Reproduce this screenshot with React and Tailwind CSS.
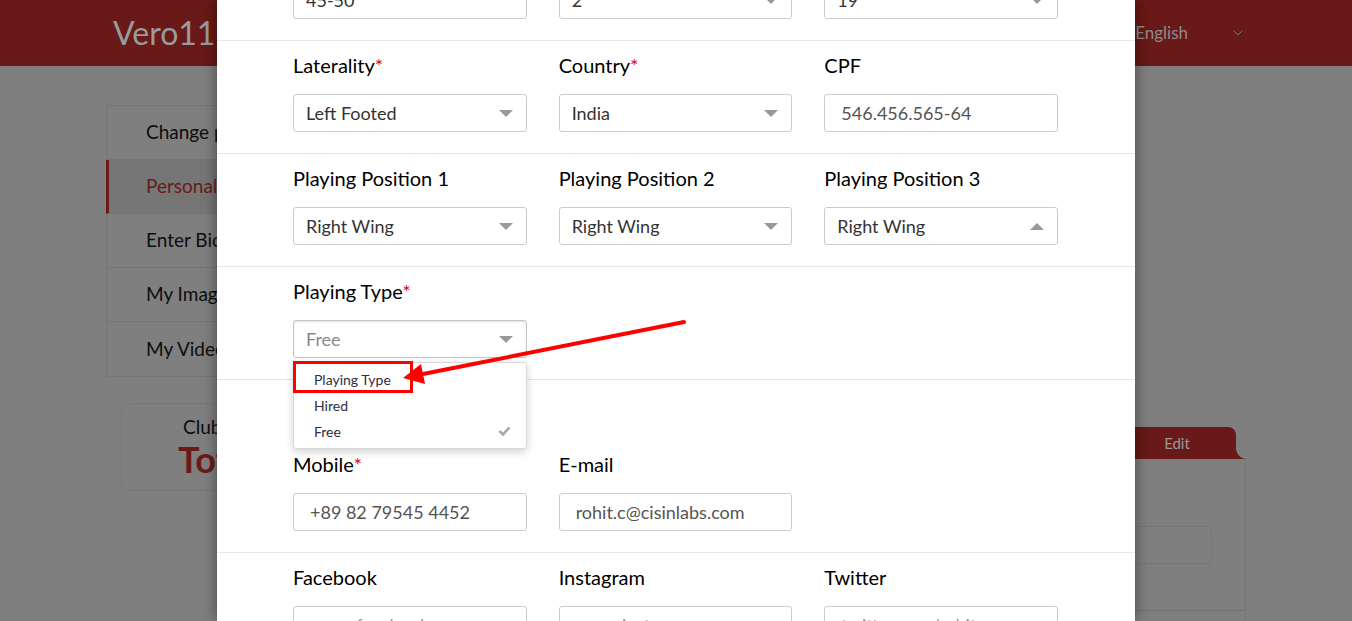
import { ChevronDown } from "lucide-react";

const Arrow = ({ up }) => (
  <svg width="14" height="7" viewBox="0 0 14 7" className="shrink-0">
    {up ? <polygon points="0,7 14,7 7,0" fill="#999" /> : <polygon points="0,0 14,0 7,7" fill="#999" />}
  </svg>
);

function Label({ text, required }) {
  return (
    <div className="mb-[16px] text-[20px] leading-[25px] text-black">
      {text}
      {required && <span className="text-[#e4001b]">*</span>}
    </div>
  );
}

function Select({ value, up, muted, focused, noArrow }) {
  return (
    <div
      className={`flex h-[38px] items-center justify-between rounded-[3px] border bg-white pl-3 pr-[13px] text-[18px] ${
        focused ? "border-[#c4c4c4] shadow-[inset_0_1px_2px_rgba(0,0,0,0.12)]" : "border-[#ccc]"
      } ${muted ? "text-[#888]" : "text-[#333]"}`}
    >
      <span>{value}</span>
      {!noArrow && <Arrow up={up} />}
    </div>
  );
}

function Input({ value, placeholder }) {
  return (
    <div className="flex h-[38px] items-center rounded-[3px] border border-[#ccc] bg-white px-4 text-[18px] text-[#555]">
      {value ? <span>{value}</span> : <span className="text-[#999]">{placeholder}</span>}
    </div>
  );
}

function Section({ children, className = "" }) {
  return (
    <div className={`border-b border-[#e6e6e6] pb-[21px] pl-[76px] pr-[77px] ${className}`}>
      <div className="grid grid-cols-3 gap-x-[32px]">{children}</div>
    </div>
  );
}

const sideItems = ["Change password", "Personal Details", "Enter Bio", "My Images", "My Videos"];

export default function App() {
  return (
    <div className="relative h-[621px] w-full overflow-hidden bg-[#7f7f7f] font-['Lato',sans-serif]">
      {/* page behind the modal (dimmed) */}
      <header className="flex h-[66px] items-center justify-between bg-[#691917] pl-[113px] pr-[106px]">
        <span className="text-[32px] text-[#9b9b9b]">Vero11</span>
        <div className="flex items-center gap-[42px]">
          <span className="text-[17px] text-[#8c8c8c]">English</span>
          <ChevronDown size={16} strokeWidth={1.5} color="#7a7a7a" />
        </div>
      </header>

      <div className="flex px-[106px]">
        <div className="w-[330px] pt-[39px]">
          <div className="border border-r-0 border-[#767676]">
            {sideItems.map((item, i) =>
              i === 1 ? (
                <div
                  key={item}
                  className="-ml-px flex h-[54px] items-center border-b border-l-[3px] border-[#767676] border-l-[#6b1a18] bg-[#767676] pl-[37px] text-[19px] text-[#6b1a18]"
                >
                  {item}
                </div>
              ) : (
                <div
                  key={item}
                  className="flex h-[54px] items-center border-b border-[#767676] pl-[39px] text-[19px] text-[#0d0d0d] last:border-b-0"
                >
                  {item}
                </div>
              )
            )}
          </div>
          <div className="mx-[15px] mt-[26px] flex h-[88px] flex-col justify-center rounded-[10px] border border-[#777] pl-[56px]">
            <span className="ml-[5px] text-[19px] leading-[24px] text-[#0d0d0d]">Club</span>
            <span className="text-[36px] font-bold leading-[40px] text-[#6b1a18]">Total</span>
          </div>
        </div>

        <div className="ml-auto w-[420px] pt-[361px]">
          <div className="flex justify-end pr-[10px]">
            <div className="relative flex h-[32px] w-[118px] items-center justify-center rounded-t-[8px] bg-[#691917] text-[15px] text-[#9a9a9a]">
              Edit
              <svg width="12" height="16" viewBox="0 0 12 16" className="absolute bottom-0 right-[-11px]">
                <path d="M0 0 Q1 16 12 16 L0 16 Z" fill="#691917" />
              </svg>
            </div>
          </div>
          <div className="h-[200px] border border-t-0 border-[#777]">
            <div className="h-[152px] border-b border-[#737373] pr-[33px] pt-[67px]">
              <div className="h-[38px] rounded-[4px] border border-[#777]" />
            </div>
          </div>
        </div>
      </div>

      {/* modal */}
      <div className="absolute inset-0 flex justify-center">
        <div className="h-full w-[918px] bg-white shadow-[0_0_14px_rgba(0,0,0,0.45)]">
          <div className="-mt-[72px]">
            <Section className="pt-3">
              <div>
                <Label text="Weight" />
                <Select value="45-50" noArrow />
              </div>
              <div>
                <Label text="Height (ft)" />
                <Select value="2" />
              </div>
              <div>
                <Label text="Height (in)" />
                <Select value="19" />
              </div>
            </Section>

            <Section className="pt-3">
              <div>
                <Label text="Laterality" required />
                <Select value="Left Footed" />
              </div>
              <div>
                <Label text="Country" required />
                <Select value="India" />
              </div>
              <div>
                <Label text="CPF" />
                <Input value="546.456.565-64" />
              </div>
            </Section>

            <Section className="pt-3">
              <div>
                <Label text="Playing Position 1" />
                <Select value="Right Wing" />
              </div>
              <div>
                <Label text="Playing Position 2" />
                <Select value="Right Wing" />
              </div>
              <div>
                <Label text="Playing Position 3" />
                <Select value="Right Wing" up />
              </div>
            </Section>

            <Section className="relative z-10 pt-3">
              <div className="relative">
                <Label text="Playing Type" required />
                <Select value="Free" muted focused />
                <div className="absolute left-0 right-0 top-[83px] rounded-[3px] border border-[#d9d9d9] bg-white pb-[4px] pt-[3px] text-[14px] text-[#2e2e3e] shadow-[0_3px_8px_rgba(0,0,0,0.18)]">
                  <div className="flex h-[26px] items-center pl-5">Playing Type</div>
                  <div className="flex h-[26px] items-center pl-5">Hired</div>
                  <div className="flex h-[26px] items-center justify-between pl-5 pr-[15px]">
                    <span>Free</span>
                    <svg width="13" height="10" viewBox="0 0 13 10">
                      <polyline points="1.5,5 5,8.5 11.5,1.5" fill="none" stroke="#a8a8a8" strokeWidth="2.6" />
                    </svg>
                  </div>
                </div>
              </div>
            </Section>

            <Section className="pt-[72px]">
              <div>
                <Label text="Mobile" required />
                <Input value="+89 82 79545 4452" />
              </div>
              <div>
                <Label text="E-mail" />
                <Input value="rohit.c@cisinlabs.com" />
              </div>
            </Section>

            <Section className="pt-3">
              <div>
                <Label text="Facebook" />
                <Input placeholder="www.facebook.com" />
              </div>
              <div>
                <Label text="Instagram" />
                <Input placeholder="www.instagram.com" />
              </div>
              <div>
                <Label text="Twitter" />
                <Input placeholder="twitter.com/rohit" />
              </div>
            </Section>
          </div>
        </div>
      </div>

      {/* annotation */}
      <div className="absolute left-[293px] top-[361px] z-20 h-[32px] w-[120px] border-[3px] border-[#ff0000]" />
      <svg className="absolute left-0 top-0 z-20" width="1352" height="621" viewBox="0 0 1352 621">
        <line x1="684" y1="322" x2="418" y2="375" stroke="#ff0000" strokeWidth="4" strokeLinecap="round" />
        <polygon points="403,378 425,384 421,364" fill="#ff0000" />
      </svg>
    </div>
  );
}
